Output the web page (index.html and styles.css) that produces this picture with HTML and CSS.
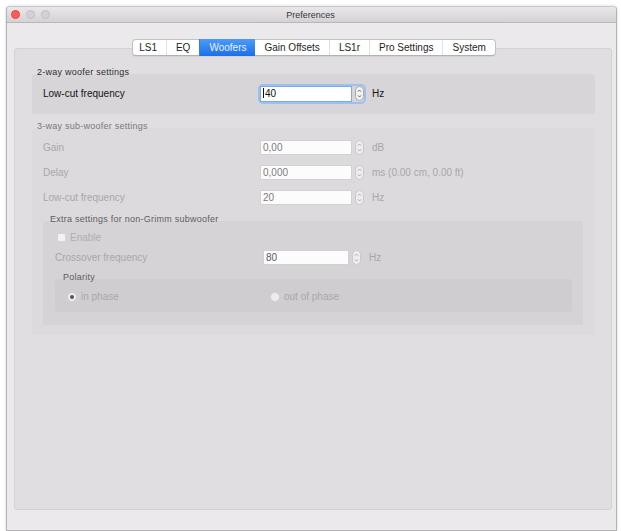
FILE: index.html
```html
<!DOCTYPE html>
<html lang="en">
<head>
    <meta charset="UTF-8">
    <title>Preferences</title>
    <link rel="stylesheet" href="styles.css">
</head>
<body>
    <div class="window">
        <div class="titlebar">
            <div class="lights">
                <span class="light close"></span>
                <span class="light"></span>
                <span class="light"></span>
            </div>
            <div class="title">Preferences</div>
        </div>

        <div class="window-body">
            <div class="tabs">
                <span class="tab">LS1</span>
                <span class="tab">EQ</span>
                <span class="tab active">Woofers</span>
                <span class="tab">Gain Offsets</span>
                <span class="tab">LS1r</span>
                <span class="tab">Pro Settings</span>
                <span class="tab">System</span>
            </div>

            <div class="pane">
                <!-- 2-way -->
                <div class="group-title">2-way woofer settings</div>
                <div class="box box-twoway">
                    <div class="row">
                        <span class="label strong">Low-cut frequency</span>
                        <div class="spinbox focus">
                            <div class="field"><span class="caret"></span>40</div>
                            <svg class="spin" width="9" height="15" viewBox="0 0 9 15"><rect x=".5" y=".5" width="8" height="14" rx="4" fill="#f4f3f4" stroke="#a9a7ab"/><path d="M3 5.6l1.5-1.6 1.5 1.6M3 9.4l1.5 1.6 1.5-1.6" fill="none" stroke="#555" stroke-width=".9"/></svg>
                        </div>
                        <span class="unit strong">Hz</span>
                    </div>
                </div>

                <!-- 3-way -->
                <div class="group-title muted spaced">3-way sub-woofer settings</div>
                <div class="box box-threeway">
                    <div class="row">
                        <span class="label">Gain</span>
                        <div class="spinbox">
                            <div class="field">0,00</div>
                            <svg class="spin" width="9" height="15" viewBox="0 0 9 15"><rect x=".5" y=".5" width="8" height="14" rx="4" fill="#eeedee" stroke="#cac8ca"/><path d="M3 5.6l1.5-1.6 1.5 1.6M3 9.4l1.5 1.6 1.5-1.6" fill="none" stroke="#a3a1a3" stroke-width=".9"/></svg>
                        </div>
                        <span class="unit">dB</span>
                    </div>
                    <div class="row">
                        <span class="label">Delay</span>
                        <div class="spinbox">
                            <div class="field">0,000</div>
                            <svg class="spin" width="9" height="15" viewBox="0 0 9 15"><rect x=".5" y=".5" width="8" height="14" rx="4" fill="#eeedee" stroke="#cac8ca"/><path d="M3 5.6l1.5-1.6 1.5 1.6M3 9.4l1.5 1.6 1.5-1.6" fill="none" stroke="#a3a1a3" stroke-width=".9"/></svg>
                        </div>
                        <span class="unit">ms (0.00 cm, 0.00 ft)</span>
                    </div>
                    <div class="row">
                        <span class="label">Low-cut frequency</span>
                        <div class="spinbox">
                            <div class="field">20</div>
                            <svg class="spin" width="9" height="15" viewBox="0 0 9 15"><rect x=".5" y=".5" width="8" height="14" rx="4" fill="#eeedee" stroke="#cac8ca"/><path d="M3 5.6l1.5-1.6 1.5 1.6M3 9.4l1.5 1.6 1.5-1.6" fill="none" stroke="#a3a1a3" stroke-width=".9"/></svg>
                        </div>
                        <span class="unit">Hz</span>
                    </div>

                    <div class="group-title inner-title">Extra settings for non-Grimm subwoofer</div>
                    <div class="box box-inner">
                        <div class="row check-row">
                            <span class="checkbox"></span>
                            <span class="check-label">Enable</span>
                        </div>
                        <div class="row">
                            <span class="label">Crossover frequency</span>
                            <div class="spinbox">
                                <div class="field">80</div>
                                <svg class="spin" width="9" height="15" viewBox="0 0 9 15"><rect x=".5" y=".5" width="8" height="14" rx="4" fill="#eeedee" stroke="#cac8ca"/><path d="M3 5.6l1.5-1.6 1.5 1.6M3 9.4l1.5 1.6 1.5-1.6" fill="none" stroke="#a3a1a3" stroke-width=".9"/></svg>
                            </div>
                            <span class="unit">Hz</span>
                        </div>

                        <div class="group-title polarity-title">Polarity</div>
                        <div class="box box-polarity">
                            <div class="radio-row">
                                <span class="radio-item"><span class="radio checked"></span>in phase</span>
                                <span class="radio-item"><span class="radio"></span>out of phase</span>
                            </div>
                        </div>
                    </div>
                </div>
            </div>
        </div>
    </div>
</body>
</html>
```

FILE: styles.css
```css
* {
    margin: 0;
    padding: 0;
    box-sizing: border-box;
    font-family: 'Liberation Sans', Arial, sans-serif;
}

body {
    background: #ffffff;
    padding: 6px 0 0 6px;
    height: 531px;
    overflow: hidden;
}

.window {
    width: 611px;
    height: 525px;
    border: 1px solid #b4b2b4;
    border-top-color: #c9c7c9;
    border-radius: 4px 4px 0 0;
    background: #ebe9eb;
    box-shadow: 0 0 3px rgba(0, 0, 0, 0.18);
    display: flex;
    flex-direction: column;
}

/* title bar */

.titlebar {
    height: 16px;
    flex-shrink: 0;
    background: linear-gradient(#e9e7e9, #d4d2d4);
    border-bottom: 1px solid #b9b7b9;
    border-radius: 3px 3px 0 0;
    display: flex;
    align-items: center;
    position: relative;
}

.lights {
    display: flex;
    gap: 6px;
    padding-left: 4px;
}

.light {
    width: 9px;
    height: 9px;
    border-radius: 50%;
    background: #d3d1d3;
    border: 1px solid #c1bfc1;
}

.light.close {
    background: #fc5e57;
    border-color: #e2463f;
}

.title {
    flex: 1;
    text-align: center;
    font-size: 9px;
    color: #3a383a;
    margin-right: 45px;
}

/* tabs */

.window-body {
    flex: 1;
    display: flex;
    flex-direction: column;
    padding: 16px 4px 20px 7px;
}

.tabs {
    align-self: center;
    display: flex;
    height: 17px;
    margin-bottom: -8px;
    margin-left: 2px;
    background: #ffffff;
    border: 1px solid #c3c1c3;
    border-bottom-color: #b3b1b3;
    border-radius: 4px;
    position: relative;
    z-index: 1;
    box-shadow: 0 1px 1px rgba(0, 0, 0, 0.06);
}

.tab {
    font-size: 10px;
    line-height: 15px;
    padding: 0 9px;
    color: #1e1e1e;
    border-left: 1px solid #e2e0e2;
}

.tab:first-child {
    border-left: none;
    padding-left: 6px;
}

.tab.active {
    background: linear-gradient(#4c9bfa, #1b6fe9);
    color: #eaf2ff;
    border-left-color: #2f7ff0;
    margin: -1px 0;
    line-height: 17px;
}

.tab.active + .tab {
    border-left: none;
}

.pane {
    flex: 1;
    background: #e0dee0;
    border: 1px solid #d4d2d4;
    border-radius: 3px;
    padding: 18px 16px 0 17px;
}

/* group boxes */

.group-title {
    font-size: 9px;
    line-height: 10px;
    letter-spacing: 0.25px;
    color: #2e2c2e;
    padding-left: 5px;
    margin-bottom: -3px;
    position: relative;
}

.group-title.muted {
    color: #7a787a;
}

.group-title.spaced {
    margin-top: 7px;
}

.box {
    border-radius: 3px;
}

.box-twoway {
    background: #d7d5d7;
    padding: 12px 11px 13px;
}

.box-threeway {
    background: #dcdadc;
    padding: 12px 12px 10px 11px;
}

.box-inner {
    background: #d5d3d5;
    padding: 9px 11px 13px 12px;
}

.box-polarity {
    background: #cfcdcf;
    padding: 10px 12px 8px;
}

.inner-title {
    margin-top: 9px;
    padding-left: 7px;
    color: #5e5c5e;
}

.polarity-title {
    margin-top: 7px;
    padding-left: 8px;
    color: #5e5c5e;
}

.row {
    display: flex;
    align-items: center;
    height: 15px;
}

.row + .row {
    margin-top: 10px;
}

.box-inner .row + .row {
    margin-top: 5px;
}

.label {
    width: 217px;
    font-size: 10px;
    color: #a9a7a9;
}

.box-inner .label {
    width: 208px;
}

.label.strong {
    color: #161416;
}

.unit {
    font-size: 10px;
    color: #a9a7a9;
    margin-left: 8px;
}

.unit.strong {
    color: #161416;
}

/* spin boxes */

.spinbox {
    display: flex;
    align-items: center;
    gap: 3px;
}

.spinbox.focus {
    height: 16px;
    box-shadow: 0 0 0 2px #9cc1f0;
    border-radius: 3px;
}

.field {
    width: 92px;
    height: 15px;
    background: #fcfcfc;
    border: 1px solid #d2d0d2;
    font-size: 10px;
    line-height: 13px;
    padding-left: 2px;
    color: #7d7b7d;
}

.box-inner .field {
    width: 86px;
    color: #5d5b5d;
}

.focus .field {
    height: 16px;
    border-color: #7ea9e6;
    color: #111111;
    background: #ffffff;
}

.caret {
    display: inline-block;
    width: 1px;
    height: 10px;
    background: #111111;
    vertical-align: -1px;
    margin-right: 1px;
}

/* check / radio */

.check-row {
    padding-left: 2px;
}

.checkbox {
    width: 9px;
    height: 9px;
    background: #f3f2f3;
    border: 1px solid #d6d4d6;
    border-radius: 2px;
}

.check-label {
    font-size: 10px;
    color: #b0aeb0;
    margin-left: 4px;
}

.radio-row {
    display: grid;
    grid-template-columns: 203px 1fr;
    height: 15px;
    align-items: center;
}

.radio-item {
    display: flex;
    align-items: center;
    gap: 4px;
    font-size: 10px;
    color: #aaa8aa;
}

.radio {
    width: 10px;
    height: 10px;
    border-radius: 50%;
    background: #eeedee;
    border: 1px solid #d2d0d2;
    display: flex;
    align-items: center;
    justify-content: center;
}

.radio.checked::after {
    content: '';
    width: 4px;
    height: 4px;
    border-radius: 50%;
    background: #555355;
}
```
